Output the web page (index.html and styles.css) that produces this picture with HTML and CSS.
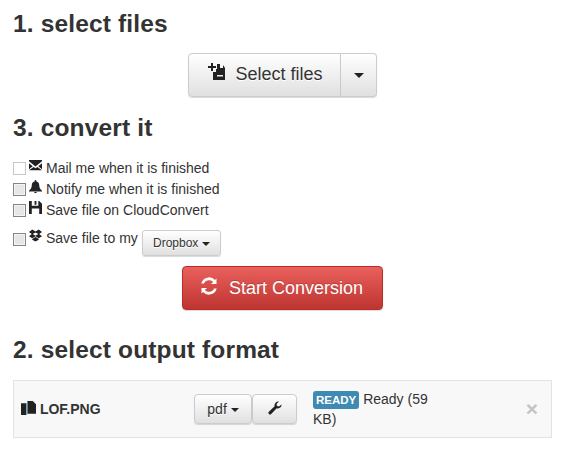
FILE: index.html
```html
<!DOCTYPE html>
<html lang="en">
<head>
  <meta charset="UTF-8">
  <title>CloudConvert</title>
  <link rel="stylesheet" href="styles.css">
</head>
<body>
  <h2 class="step-title first">1. select files</h2>
  <div class="center">
    <div class="btn-group">
      <button type="button" class="btn btn-lg select-btn">
        <svg class="icon icon-file" viewBox="0 0 18 18"><path fill="#222" d="M3 0h2v3h3v2H5v3H3V5H0V3h3zM9 1h3v4h3V2l2 3v12H5V9h3V6h1z"/><path fill="#eee" d="M9 12h6v1.500H9z"/></svg>
        Select files
      </button>
      <button type="button" class="btn btn-lg caret-btn"><span class="caret"></span></button>
    </div>
  </div>

  <h2 class="step-title second">3. convert it</h2>
  <div class="options">
    <label class="option">
      <input type="checkbox" class="check check-light">
      <svg class="icon icon-opt" viewBox="0 0 14 12"><path fill="#222" d="M0 0h14v1.500L7 7 0 1.500zM0 3.500 4 6.700 0 10zM14 3.500 10 6.700 14 10zM5 7.500l2 1.500 2-1.500 5 3.500H0z"/></svg>
      <span>Mail me when it is finished</span>
    </label>
    <label class="option">
      <input type="checkbox" class="check">
      <svg class="icon icon-opt" viewBox="0 0 14 14"><path fill="#222" d="M7 0c1 0 1 1 1 1.500 2 .5 3 2 3 4 0 3 1 4.500 3 6v1H0v-1c2-1.500 3-3 3-6 0-2 1-3.500 3-4C6 1 6 0 7 0zM5.500 13h3c0 1-.7 1-1.500 1s-1.500 0-1.500-1z"/></svg>
      <span>Notify me when it is finished</span>
    </label>
    <label class="option">
      <input type="checkbox" class="check">
      <svg class="icon icon-opt" viewBox="0 0 14 14"><path fill="#222" d="M0 0h11l3 3v11H0zM3 0v5h7V0H8v4H6V0zM3 8v6h8V8z"/></svg>
      <span>Save file on CloudConvert</span>
    </label>
    <div class="option option-dropbox">
      <label class="dropbox-label">
        <input type="checkbox" class="check">
        <svg class="icon icon-opt" viewBox="0 0 14 13"><path fill="#222" d="M3.500 0 7 2.300 10.500 0 14 2.700 11 5l3 2.300-3.500 2.200L7 7.200 3.500 9.500 0 7.300 3 5 0 2.700zM7 3.200 4 5l3 1.800L10 5zM3.500 10.400 7 8.200l3.500 2.200v.8L7 13l-3.500-1.800z"/></svg>
        <span>Save file to my</span>
      </label>
      <button type="button" class="btn btn-sm">Dropbox <span class="caret"></span></button>
    </div>
  </div>

  <div class="center">
    <button type="button" class="btn btn-lg btn-start">
      <svg class="icon icon-refresh" viewBox="0 0 18 18"><path fill="#fff" d="M16.500 1.500V7h-5.500l2.100-2.100A5.500 5.500 0 0 0 4 6.500H1.300A8 8 0 0 1 15 3zM1.500 16.500V11H7l-2.100 2.100A5.500 5.500 0 0 0 14 11.500h2.700A8 8 0 0 1 3 15z"/></svg>
      Start Conversion
    </button>
  </div>

  <h2 class="step-title third">2. select output format</h2>
  <div class="file-row">
    <div class="file-name">
      <svg class="icon icon-doc" viewBox="0 0 14 14"><path fill="#222" d="M0 2h5v11H0zM6 0h5l3 3v9H6z"/><path fill="#39c" d="M5 2h1v11H5z" opacity=".6"/></svg>
      LOF.PNG
    </div>
    <div class="file-actions">
      <button type="button" class="btn btn-fmt">pdf <span class="caret"></span></button>
      <button type="button" class="btn btn-wrench">
        <svg class="icon icon-wrench" viewBox="0 0 14 14"><path fill="#222" d="M13.500 3.500c.4 2-1.200 4-3.500 4-.5 0-1 0-1.300-.2L3.200 13a1.600 1.600 0 0 1-2.300-2.300l5.700-5.500C6 2.500 8.300 0 11 .5L8.500 3l.5 2 2 .5z"/></svg>
      </button>
    </div>
    <div class="file-status"><span class="label">READY</span> Ready (59 KB)</div>
    <div class="file-close">&times;</div>
  </div>
</body>
</html>
```
FILE: styles.css
```css
* {
  box-sizing: border-box;
}
body {
  font-family: "Liberation Sans", Arial, sans-serif;
  font-size: 14px;
  line-height: 20px;
  color: #333;
  background: #fff;
  margin: 0;
  padding: 0 12px 0 13px;
}
.step-title {
  font-size: 24.5px;
  letter-spacing: .15px;
  line-height: 26px;
  font-weight: bold;
  margin: 0;
  color: #333;
}
.first {
  padding-top: 11px;
  margin-bottom: 16px;
}
.second {
  margin-top: 18px;
  margin-bottom: 16px;
}
.third {
  margin-top: 27px;
  margin-bottom: 17px;
}
.center {
  display: flex;
  justify-content: center;
}
.btn {
  font-family: inherit;
  color: #333;
  border: 1px solid #ccc;
  border-radius: 4px;
  background: linear-gradient(to bottom, #fff 0, #e0e0e0 100%);
  box-shadow: 0 1px 1px rgba(0, 0, 0, .15);
  cursor: pointer;
  text-shadow: 0 1px 0 #fff;
}
.btn-lg {
  font-size: 18px;
  height: 44px;
  padding: 0 16px;
}
.btn-group {
  display: flex;
}
.select-btn {
  width: 153px;
  padding: 0 0 2px 2px;
  border-radius: 4px 0 0 4px;
}
.caret-btn {
  width: 36px;
  padding: 0;
  border-left: 0;
  border-radius: 0 4px 4px 0;
}
.caret {
  display: inline-block;
  width: 0;
  height: 0;
  vertical-align: middle;
  border-top: 4px solid #222;
  border-left: 4px solid transparent;
  border-right: 4px solid transparent;
}
.caret-btn .caret {
  border-top-width: 5px;
  border-left-width: 5px;
  border-right-width: 5px;
}
.icon {
  display: inline-block;
}
.icon-file {
  width: 18px;
  height: 18px;
  margin-right: 4px;
  vertical-align: -1px;
}
.options {
  display: flex;
  flex-direction: column;
}
.option {
  display: flex;
  align-items: center;
  height: 21px;
  white-space: nowrap;
}
.check {
  appearance: none;
  flex: none;
  width: 13px;
  height: 13px;
  margin: 2px 3px 0 0;
  border: 1px solid #858585;
  background: #e6e6e6;
  box-shadow: inset 0 0 0 1px #f4f4f4;
}
.check-light {
  border-color: #c8c8c8;
  background: #fff;
  box-shadow: none;
}
.option-dropbox {
  height: 26px;
  margin-top: 10px;
  margin-bottom: 10px;
}
.dropbox-label {
  display: flex;
  align-items: center;
  margin-top: -10px;
}
.icon-opt {
  flex: none;
  width: 13px;
  height: 13px;
  margin: -5px 4px 0 0;
}
.btn-sm {
  font-size: 12px;
  height: 26px;
  width: 79px;
  padding: 0;
  margin-left: 4px;
  border-radius: 3px;
}
.btn-start {
  width: 201px;
  padding: 0 2px 0 0;
  color: #fff;
  border: 1px solid #b92c28;
  background: linear-gradient(to bottom, #e9605c 0, #bd3430 100%);
  text-shadow: 0 -1px 0 rgba(0, 0, 0, .2);
}
.icon-refresh {
  width: 18px;
  height: 18px;
  margin-right: 6px;
  vertical-align: -1px;
}
.file-row {
  display: flex;
  align-items: center;
  height: 58px;
  background: #f8f8f9;
  border: 1px solid #e3e3e3;
  padding-left: 7px;
}
.file-name {
  width: 173px;
  font-size: 14px;
  font-weight: bold;
}
.icon-doc {
  width: 15px;
  height: 15px;
  vertical-align: -2px;
}
.file-actions {
  display: flex;
  width: 119px;
}
.btn-fmt {
  font-size: 14px;
  width: 58px;
  height: 30px;
  padding: 0;
}
.btn-wrench {
  width: 45px;
  height: 30px;
  padding: 0;
}
.icon-wrench {
  width: 14px;
  height: 14px;
}
.file-status {
  width: 136px;
  line-height: 20px;
}
.label {
  display: inline-block;
  background: #3e8ab0;
  color: #fff;
  font-size: 11.5px;
  font-weight: bold;
  line-height: 18px;
  padding: 0 3px;
  border-radius: 3px;
}
.file-close {
  margin-left: auto;
  margin-right: 13px;
  font-size: 21px;
  font-weight: bold;
  color: #c4c4c4;
}
```
